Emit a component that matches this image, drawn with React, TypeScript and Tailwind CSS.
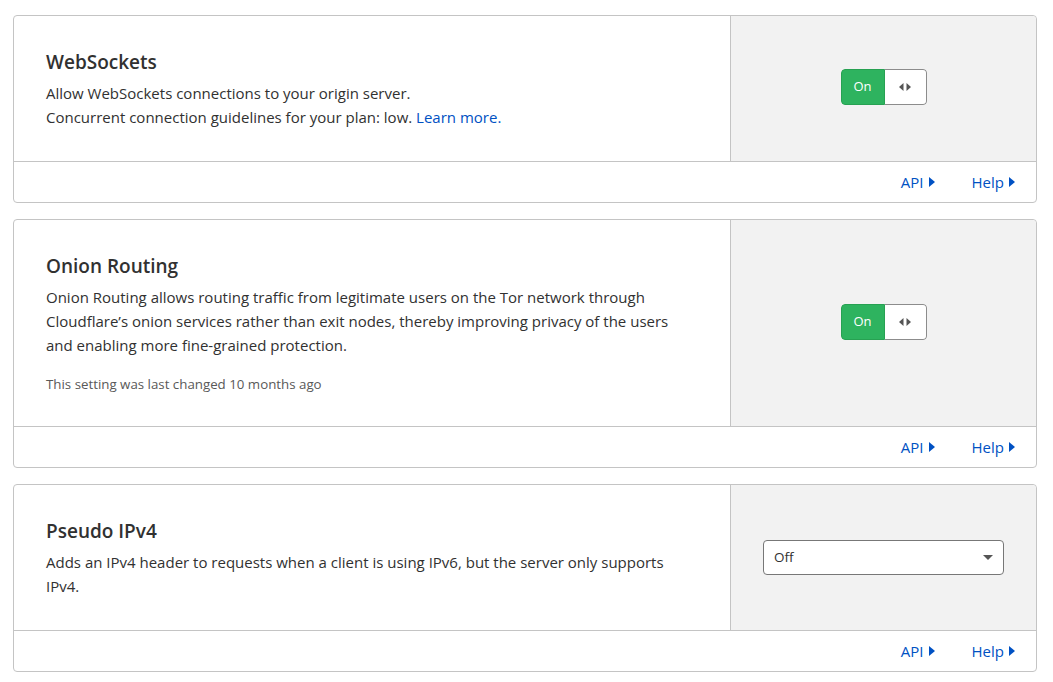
import React from 'react';

const font = { fontFamily: '"Open Sans", "Noto Sans", Arial, sans-serif' };

const Caret = () => (
  <svg width="6" height="10" viewBox="0 0 6 10" className="inline-block ml-[5px]">
    <path d="M0 0 L6 5 L0 10 Z" fill="#0051c3" />
  </svg>
);

const Toggle = () => (
  <div className="flex h-[36px] w-[86px] rounded-[4px] overflow-hidden">
    <div className="flex w-[44px] items-center justify-center bg-[#2eb35f] border border-[#27a152] rounded-l-[4px] text-white text-[13px]">
      On
    </div>
    <div className="flex flex-1 items-center justify-center bg-white border border-l-0 border-[#8c8c8c] rounded-r-[4px]">
      <svg width="12" height="8" viewBox="0 0 12 8">
        <path d="M4.5 0 L0 4 L4.5 8 Z" fill="#555" />
        <path d="M7.5 0 L12 4 L7.5 8 Z" fill="#555" />
      </svg>
    </div>
  </div>
);

const Select = () => (
  <div className="flex h-[35px] w-[241px] items-center justify-between rounded-[4px] border border-[#777] bg-white pl-[10px] pr-[10px] text-[13.5px] text-[#313131]">
    <span>Off</span>
    <svg width="10" height="5" viewBox="0 0 10 5">
      <path d="M0 0 L10 0 L5 5 Z" fill="#555" />
    </svg>
  </div>
);

type CardProps = {
  title: string;
  children: React.ReactNode;
  control: React.ReactNode;
  lift?: boolean;
};

const Card = ({ title, children, control, lift }: CardProps) => (
  <div className="rounded-[4px] border border-[#c4c4c4] bg-white">
    <div className="flex">
      <div className="flex-1 pl-[32px] pr-[40px] pt-[32px] pb-[32px]">
        <h3 className="text-[19px] leading-[28px] font-semibold text-[#313131]">{title}</h3>
        <div className="mt-[5px] text-[15px] leading-[24px] text-[#313131]">{children}</div>
      </div>
      <div
        className={`flex w-[306px] shrink-0 items-center justify-center border-l border-[#c4c4c4] bg-[#f2f2f2] rounded-tr-[4px] ${
          lift ? 'pb-[3px]' : ''
        }`}
      >
        {control}
      </div>
    </div>
    <div className="flex h-[41px] items-center justify-end gap-[37px] border-t border-[#c4c4c4] pr-[21px] text-[15px] text-[#0051c3]">
      <a className="flex items-center">API<Caret /></a>
      <a className="flex items-center">Help<Caret /></a>
    </div>
  </div>
);

export default function App() {
  return (
    <div className="min-h-screen bg-white pl-[13px] pt-[15px] w-[1053px]" style={font}>
      <div className="flex w-[1024px] flex-col gap-[16px]">
        <Card title="WebSockets" control={<Toggle />} lift>
          <p>Allow WebSockets connections to your origin server.</p>
          <p>
            Concurrent connection guidelines for your plan: low.{' '}
            <a className="text-[#0051c3]">Learn more.</a>
          </p>
        </Card>
        <Card title="Onion Routing" control={<Toggle />} lift>
          <p>
            Onion Routing allows routing traffic from legitimate users on the Tor network through
            Cloudflare’s onion services rather than exit nodes, thereby improving privacy of the users
            and enabling more fine-grained protection.
          </p>
          <p className="mt-[17px] text-[13.3px] leading-[20px] text-[#595959]">
            This setting was last changed 10 months ago
          </p>
        </Card>
        <Card title="Pseudo IPv4" control={<Select />}>
          <p>
            Adds an IPv4 header to requests when a client is using IPv6, but the server only supports
            IPv4.
          </p>
        </Card>
      </div>
    </div>
  );
}
